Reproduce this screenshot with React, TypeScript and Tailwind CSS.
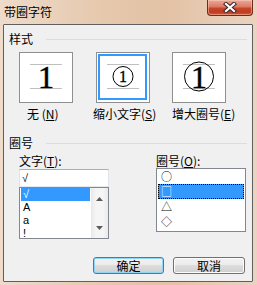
import React from 'react';

const CloseButton: React.FC = () => (
  <div className="ml-auto mr-[4px] w-[46px] h-[16px] rounded-b-[4px] border border-t-0 border-[#6e2b1f] bg-[linear-gradient(180deg,#e9a998_0%,#dc7a63_45%,#c8452a_55%,#c23a20_80%,#d0593d_100%)] shadow-[inset_0_0_0_1px_rgba(255,220,200,0.45)] flex items-center justify-center">
    <svg width="14" height="11" viewBox="0 0 14 11">
      <path d="M3 2 L11 9 M11 2 L3 9" stroke="#3c2a26" strokeWidth="4.2" strokeLinecap="square" />
      <path d="M3 2 L11 9 M11 2 L3 9" stroke="#ffffff" strokeWidth="2.2" strokeLinecap="square" />
    </svg>
  </div>
);

const GroupHeader: React.FC<{ label: string; className?: string }> = ({ label, className }) => (
  <div className={`flex items-center h-[14px] pl-[5px] pr-[5px] ${className ?? ''}`}>
    <span className="text-[12px] leading-[14px]">{label}</span>
    <div className="ml-[13px] flex-1 h-px bg-[#d5dfe5]" />
  </div>
);

// preview boxes (drawings of the circled character)
const PreviewBox: React.FC<{ kind: 'none' | 'shrink' | 'enlarge'; selected?: boolean; className?: string }> = ({ kind, selected, className }) => (
  <div className={`w-[54px] h-[51px] border border-[#8e8f8f] bg-white ${className ?? ''}`}>
    <svg width="52" height="49" viewBox="0 0 52 49">
      {selected && <rect x="2" y="2" width="47" height="44" fill="none" stroke="#3399ff" strokeWidth="2" />}
      <line x1="10" y1="11.5" x2="42" y2="11.5" stroke="#c0c0c0" strokeWidth="1" />
      <line x1="10" y1="35.5" x2="42" y2="35.5" stroke="#c0c0c0" strokeWidth="1" />
      {kind === 'none' && (
        <text x="26" y="35" textAnchor="middle" fontFamily="Liberation Serif, serif" fontSize="32" fill="#000" stroke="#000" strokeWidth="0.5">1</text>
      )}
      {kind === 'shrink' && (
        <>
          <circle cx="26" cy="23.5" r="10" fill="none" stroke="#000" strokeWidth="1" />
          <text x="26" y="29" textAnchor="middle" fontFamily="Liberation Serif, serif" fontSize="16" fill="#000" stroke="#000" strokeWidth="0.3">1</text>
        </>
      )}
      {kind === 'enlarge' && (
        <>
          <circle cx="26" cy="23.5" r="14.5" fill="none" stroke="#000" strokeWidth="1" />
          <text x="26" y="35" textAnchor="middle" fontFamily="Liberation Serif, serif" fontSize="32" fill="#000" stroke="#000" strokeWidth="0.5">1</text>
        </>
      )}
    </svg>
  </div>
);

const ScrollArrow: React.FC<{ up?: boolean }> = ({ up }) => (
  <svg width="7" height="4" viewBox="0 0 7 4">
    <path d={up ? 'M3.5 0 L7 4 L0 4 Z' : 'M0 0 L7 0 L3.5 4 Z'} fill="#5b5b5b" />
  </svg>
);

const WinButton: React.FC<{ label: string; isDefault?: boolean; className?: string }> = ({ label, isDefault, className }) => (
  <button
    className={`h-[17px] rounded-[3px] border text-[12px] leading-[14px] flex items-center justify-center bg-[linear-gradient(180deg,#f2f2f2_0%,#ebebeb_50%,#dddddd_50%,#cfcfcf_100%)] ${
      isDefault ? 'border-[#3c7fb1] shadow-[inset_0_0_0_1px_#8fd6f5]' : 'border-[#707070] shadow-[inset_0_0_0_1px_#fcfcfc]'
    } ${className ?? ''}`}
  >
    {label}
  </button>
);

export default function App() {
  const leftItems = ['√', 'A', 'a', '!'];
  const rightItems = ['○', '□', '△', '◇'];

  return (
    <div className="w-[257px] h-[285px] overflow-hidden flex flex-col text-black font-['Noto_Sans_CJK_SC',sans-serif] bg-[linear-gradient(90deg,#eedbca_0%,#e6c8ad_40%,#e3c2a5_65%,#ebd3c0_100%)]">
      <div className="h-[24px] flex items-start shrink-0">
        <span className="ml-[4px] mt-[5px] text-[12px] leading-[14px] text-black">带圈字符</span>
        <CloseButton />
      </div>

      <div className="ml-[3px] w-[250px] h-[258px] border border-[#5f5f5f] rounded-[1px] bg-[#f0f0f0] flex flex-col shrink-0">
        <GroupHeader label="样式" className="mt-[7px]" />

        <div className="flex mt-[6px] ml-[15px]">
          <PreviewBox kind="none" />
          <PreviewBox kind="shrink" selected className="ml-[23px]" />
          <PreviewBox kind="enlarge" className="ml-[22px]" />
        </div>

        <div className="flex mt-[4px] text-[12px] leading-[14px]">
          <span className="ml-[23px] w-[66px]">无 (<span className="underline">N</span>)</span>
          <span className="w-[79px]">缩小文字(<span className="underline">S</span>)</span>
          <span>增大圈号(<span className="underline">E</span>)</span>
        </div>

        <GroupHeader label="圈号" className="mt-[15px]" />

        <div className="flex mt-[4px] text-[12px]">
          <div className="ml-[15px] w-[90px] flex flex-col">
            <div className="h-[14px] leading-[14px]">文字(<span className="underline">T</span>):</div>
            <div className="mt-[1px] h-[18px] border border-[#abadb3] border-b-[#e3e9ef] border-x-[#e2e3ea] bg-white pl-[2px] font-['Liberation_Sans',sans-serif] text-[11px] leading-[16px]">√</div>
            <div className="h-[52px] border border-[#828790] bg-white flex">
              <div className="flex-1 px-[1px] flex flex-col overflow-hidden font-['Liberation_Sans',sans-serif]">
                {leftItems.map((it, i) => (
                  <div
                    key={i}
                    className={`h-[13px] shrink-0 text-[11px] leading-[13px] pl-[2px] ${i === 0 ? 'bg-[#3399ff] text-white' : 'text-black'}`}
                  >
                    {it}
                  </div>
                ))}
              </div>
              <div className="w-[17px] bg-[linear-gradient(90deg,#e9e9e9_0%,#f5f5f5_30%,#f5f5f5_70%,#eaeaea_100%)] flex flex-col items-center justify-between pt-[9px] pb-[8px]">
                <ScrollArrow up />
                <ScrollArrow />
              </div>
            </div>
          </div>

          <div className="ml-[47px] w-[90px] flex flex-col">
            <div className="h-[14px] leading-[14px]">圈号(<span className="underline">O</span>):</div>
            <div className="h-[64px] border border-[#828790] bg-white px-[1px] flex flex-col">
              {rightItems.map((it, i) => (
                <div
                  key={i}
                  className={`h-[15px] text-[11px] leading-[13px] pl-[2px] ${
                    i === 1 ? 'bg-[#3399ff] text-white border border-dotted border-black pl-[1px]' : 'border border-transparent'
                  }`}
                >
                  {it}
                </div>
              ))}
            </div>
          </div>
        </div>

        <div className="flex mt-[18px] ml-[89px]">
          <WinButton label="确定" isDefault className="w-[71px]" />
          <WinButton label="取消" className="ml-[9px] w-[72px]" />
        </div>
      </div>
    </div>
  );
}
